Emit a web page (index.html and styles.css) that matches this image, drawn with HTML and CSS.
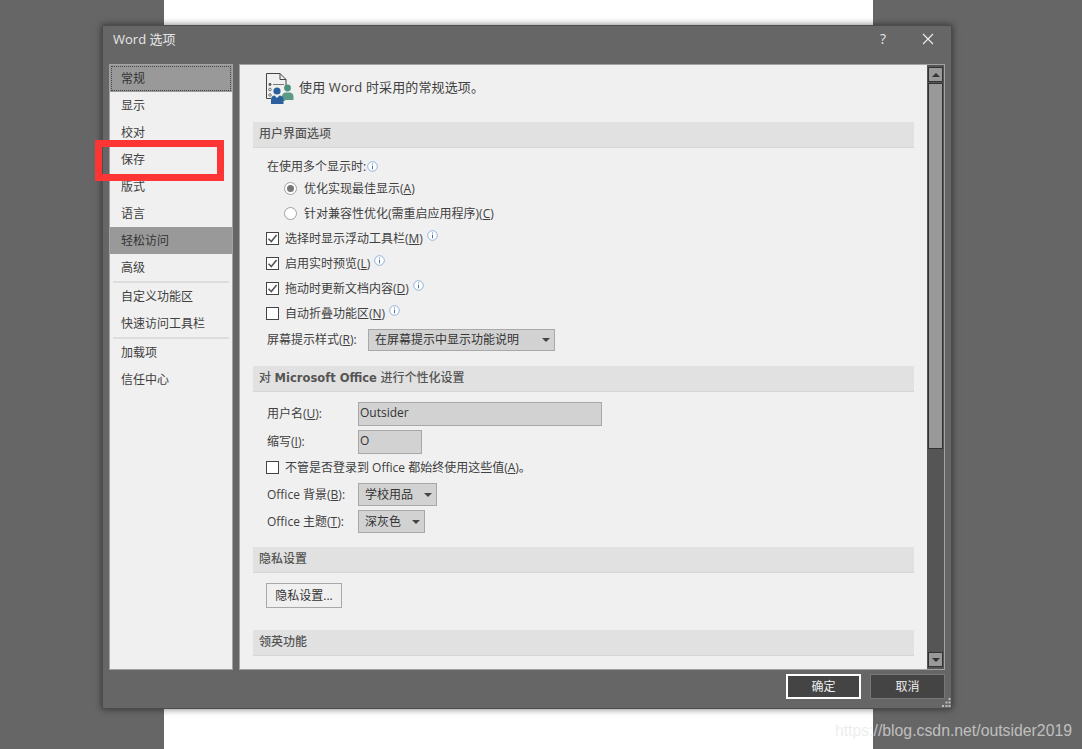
FILE: index.html
```html
<!DOCTYPE html>
<html lang="zh">
<head>
<meta charset="utf-8">
<title>Word 选项</title>
<link rel="stylesheet" href="styles.css">
</head>
<body>
<svg class="defs" width="0" height="0" aria-hidden="true">
  <symbol id="info" viewBox="0 0 11 11">
    <circle cx="5.5" cy="5.5" r="4.8" fill="#fff" stroke="#8fb2dc" stroke-width="1"/>
    <path d="M5.5 2.5v1M5.5 4.7v3.6" stroke="#4a74a8" stroke-width="1" fill="none"/>
  </symbol>
  <symbol id="tick" viewBox="0 0 11 11">
    <path d="M1.5 5.8L4.3 8.6L9.6 2" stroke="#555" stroke-width="1.6" fill="none"/>
  </symbol>
</svg>
<div class="doc"></div>

<div class="dialog">
  <header class="titlebar">
    <span class="title">Word 选项</span>
    <span class="help">?</span>
    <svg class="close" width="12" height="12" viewBox="0 0 12 12"><path d="M1 1L11 11M11 1L1 11" stroke="#eee" stroke-width="1.1" fill="none"/></svg>
  </header>

  <div class="body">
    <nav class="side">
      <div class="item current">常规</div>
      <div class="item">显示</div>
      <div class="item">校对</div>
      <div class="item">保存</div>
      <div class="item">版式</div>
      <div class="item">语言</div>
      <div class="item hover">轻松访问</div>
      <div class="item">高级</div>
      <div class="sep"></div>
      <div class="item">自定义功能区</div>
      <div class="item">快速访问工具栏</div>
      <div class="sep"></div>
      <div class="item">加载项</div>
      <div class="item">信任中心</div>
    </nav>

    <main class="main">
      <div class="content">
        <div class="intro">
          <svg class="intro-icon" width="30" height="34" viewBox="0 0 30 34">
            <path d="M1.5 27.5V2.5H15L21 8.5V14M15 2.5V8.5H21M1.5 27.5H6" stroke="#444" stroke-width="1" fill="none"/>
            <path d="M8 13.5H19" stroke="#777" stroke-width="1" fill="none"/>
            <circle cx="5" cy="13.5" r="1.4" fill="#555"/>
            <circle cx="5" cy="18.5" r="1.3" fill="none" stroke="#555" stroke-width=".8"/>
            <circle cx="5" cy="24" r="1.3" fill="none" stroke="#555" stroke-width=".8"/>
            <circle cx="22.5" cy="17" r="3.4" fill="#4f9079"/>
            <path d="M17 30V25.5C17 22.8 19 21.5 20.5 21.5H24.5C26.5 21.5 28.5 23 28.5 25.5V29H20V30Z" fill="#5c9a84"/>
            <circle cx="12" cy="20" r="3.6" fill="#2b5f9e"/>
            <path d="M6 33V28.5C6 25.8 8 24.5 9.5 24.5L12 27L14.5 24.5C16.5 24.5 18.5 26 18.5 28.5V33Z" fill="#2b5f9e"/>
          </svg>
          <span class="intro-text">使用 Word 时采用的常规选项。</span>
        </div>

        <h2 class="section">用户界面选项</h2>
        <div class="group group-ui">
          <div class="row row-lead">在使用多个显示时:<svg class="info info-lead"><use href="#info"/></svg></div>
          <div class="row indent"><span class="radio on"></span>优化实现最佳显示(<u>A</u>)</div>
          <div class="row indent"><span class="radio"></span>针对兼容性优化(需重启应用程序)(<u>C</u>)</div>
          <div class="row check"><span class="box"><svg width="11" height="11"><use href="#tick"/></svg></span>选择时显示浮动工具栏(<u>M</u>)<svg class="info"><use href="#info"/></svg></div>
          <div class="row check"><span class="box"><svg width="11" height="11"><use href="#tick"/></svg></span>启用实时预览(<u>L</u>)<svg class="info"><use href="#info"/></svg></div>
          <div class="row check"><span class="box"><svg width="11" height="11"><use href="#tick"/></svg></span>拖动时更新文档内容(<u>D</u>)<svg class="info"><use href="#info"/></svg></div>
          <div class="row check"><span class="box"></span>自动折叠功能区(<u>N</u>)<svg class="info"><use href="#info"/></svg></div>
          <div class="field field-tip">
            <span class="label label-tip">屏幕提示样式(<u>R</u>):</span>
            <span class="select select-tip">在屏幕提示中显示功能说明<i class="arrow"></i></span>
          </div>
        </div>

        <h2 class="section">对 <b>Microsoft Office</b> 进行个性化设置</h2>
        <div class="group group-office">
          <div class="field field-input">
            <span class="label">用户名(<u>U</u>):</span>
            <span class="input input-name">Outsider</span>
          </div>
          <div class="field field-input spaced">
            <span class="label">缩写(<u>I</u>):</span>
            <span class="input input-short">O</span>
          </div>
          <div class="row check row-always"><span class="box"></span>不管是否登录到 Office 都始终使用这些值(<u>A</u>)。</div>
          <div class="field field-small spaced">
            <span class="label">Office 背景(<u>B</u>):</span>
            <span class="select select-bg">学校用品<i class="arrow"></i></span>
          </div>
          <div class="field field-small spaced">
            <span class="label">Office 主题(<u>T</u>):</span>
            <span class="select select-theme">深灰色<i class="arrow"></i></span>
          </div>
        </div>

        <h2 class="section">隐私设置</h2>
        <div class="group group-privacy">
          <span class="button">隐私设置...</span>
        </div>

        <h2 class="section">领英功能</h2>
      </div>

      <div class="scrollbar">
        <span class="sb-btn"><i class="tri up"></i></span>
        <span class="sb-thumb"></span>
        <span class="sb-track"></span>
        <span class="sb-btn"><i class="tri down"></i></span>
      </div>
    </main>
  </div>

  <footer class="footer">
    <span class="action primary">确定</span>
    <span class="action">取消</span>
  </footer>

  <svg class="grip" width="9" height="9" viewBox="0 0 9 9">
    <path d="M6.5 0h2v2h-2zM3.5 3.5h2v2h-2zM6.5 3.5h2v2h-2zM0 7h2v2H0zM3.5 7h2v2h-2zM6.5 7h2v2h-2z" fill="#bbb"/>
  </svg>
</div>

<div class="redbox"></div>
<div class="watermark">https://blog.csdn.net/outsider2019</div>
</body>
</html>
```

FILE: styles.css
```css
* { box-sizing: border-box; }
html, body { margin: 0; padding: 0; }
body {
  position: relative;
  width: 1082px;
  height: 749px;
  overflow: hidden;
  background: #666;
  font: 12px/16px "Open Sans", "Noto Sans CJK SC", sans-serif;
  color: #404040;
}
.defs { position: absolute; }
.doc {
  width: 709px;
  height: 749px;
  margin-left: 164px;
  background: #fff;
}

/* dialog window on the desktop */
.dialog {
  position: absolute;
  left: 102px;
  top: 25px;
  width: 850px;
  height: 684px;
  display: flex;
  flex-direction: column;
  background: #666;
  border: 1px solid #4c4c4c;
  box-shadow: 0 0 7px rgba(0, 0, 0, .55);
}
.titlebar {
  height: 38px;
  flex: none;
  display: flex;
  align-items: center;
  padding: 0 17px 12px 10px;
  color: #e6e6e6;
}
.title { font-size: 13px; flex: 1; }
.help { font-size: 14px; margin-right: 36px; }
.body {
  height: 606px;
  flex: none;
  display: flex;
  gap: 6px;
  padding: 0 6px;
}
.footer {
  flex: 1;
  display: flex;
  justify-content: flex-end;
  gap: 9px;
  padding: 4px 6px 0 0;
}
.action {
  width: 75px;
  height: 25px;
  display: flex;
  align-items: center;
  justify-content: center;
  background: #444;
  border: 1px solid #777;
  color: #eee;
}
.primary { border: 2px solid #fff; }
.grip { position: absolute; right: 0; bottom: 1px; }

/* left list */
.side {
  width: 124px;
  flex: none;
  background: #f0f0f0;
  border: 1px solid #a3a3a3;
}
.item {
  height: 27px;
  display: flex;
  align-items: center;
  padding-left: 11px;
}
.current {
  background: #999;
  color: #333;
  outline: 1px dotted #444;
  outline-offset: -2px;
}
.hover { background: #999; color: #333; }
.sep { height: 2px; margin: 0 3px; background: #ddd; }

/* right panel */
.main {
  flex: 1;
  display: flex;
  background: #f0f0f0;
  border: 1px solid #a3a3a3;
}
.content {
  flex: 1;
  min-width: 0;
  padding: 0 13px;
  overflow: hidden;
}
.intro {
  height: 57px;
  display: flex;
  align-items: flex-start;
  padding: 6px 0 0 12px;
}
.intro-icon { flex: none; margin-right: 4px; }
.intro-text { font-size: 13px; line-height: 32px; letter-spacing: .13px; }

.section {
  height: 26px;
  margin: 0;
  display: flex;
  align-items: center;
  gap: .3em;
  padding: 0 0 2px 6px;
  background: #e1e1e1;
  border-bottom: 1px solid #d6d6d6;
  font-size: 12px;
  font-weight: 500;
  color: #555;
}
.section b {
  font-family: "DejaVu Sans", sans-serif;
  font-size: 11.5px;
  font-weight: 700;
}

.group { padding-left: 14px; }
.group-ui { padding-top: 8px; height: 218px; }
.group-office { padding-top: 10px; height: 155px; }
.group-privacy { padding: 10px 0 22px 13px; height: 57px; }

.row {
  height: 24px;
  margin-bottom: 1px;
  padding-top: 2px;
  display: flex;
  align-items: center;
  white-space: pre;
}
.row-lead { height: 20px; margin-bottom: 0; }
.indent { padding-left: 17px; }
.radio {
  width: 13px;
  height: 13px;
  margin: -2px 7px 0 0;
  border: 1px solid #a0a0a0;
  border-radius: 50%;
  background: #fff;
  display: flex;
  align-items: center;
  justify-content: center;
}
.radio.on::after {
  content: "";
  width: 7px;
  height: 7px;
  border-radius: 50%;
  background: #777;
}
.check { margin-left: -1px; }
.box {
  width: 13px;
  height: 13px;
  flex: none;
  margin: -2px 6px 0 0;
  border: 1px solid #444;
  background: #fff;
  display: flex;
  align-items: center;
  justify-content: center;
}
.info {
  width: 11px;
  height: 11px;
  margin: -7px 0 0 4px;
  flex: none;
}
.info-lead { margin: -2px 0 0 1px; }

.field { display: flex; align-items: center; }
.label { width: 91px; flex: none; }
.label-tip { width: 101px; }
.field-tip { margin-top: 4px; height: 22px; }
.field-input { height: 24px; }
.field-small { height: 23px; }
.spaced { margin-top: 4px; }
.row-always { margin-top: 1px; margin-bottom: 0; }

.select, .input {
  height: 100%;
  display: flex;
  align-items: center;
  background: #d2d2d2;
  border: 1px solid #a8a8a8;
  color: #333;
}
.select { position: relative; padding-left: 6px; }
.input { align-items: flex-start; padding: 2px 0 0 1px; }
.select-tip { width: 187px; }
.select-bg { width: 79px; }
.select-theme { width: 67px; }
.input-name { width: 244px; }
.input-short { width: 64px; }
.arrow {
  position: absolute;
  right: 4px;
  top: 50%;
  margin-top: -2px;
  border: 4px solid transparent;
  border-top: 4px solid #444;
  border-bottom: 0;
}

.button {
  width: 76px;
  height: 25px;
  display: flex;
  align-items: center;
  justify-content: center;
  background: #f0f0f0;
  border: 1px solid #a8a8a8;
  color: #333;
}

/* scrollbar */
.scrollbar {
  width: 17px;
  flex: none;
  display: flex;
  flex-direction: column;
  padding: 2px 1px;
  background: #555;
}
.sb-btn {
  height: 15px;
  flex: none;
  display: flex;
  align-items: center;
  justify-content: center;
  background: #999;
  border: 1px solid #333;
}
.sb-thumb {
  height: 366px;
  flex: none;
  margin-top: 1px;
  background: #999;
  border: 1px solid #333;
}
.sb-track { flex: 1; }
.tri { border: 4px solid transparent; border-top: 0; border-bottom: 4px solid #333; }
.tri.down { border-top: 4px solid #333; border-bottom: 0; }

/* annotations lying over the screenshot */
.redbox {
  position: absolute;
  left: 95px;
  top: 140px;
  width: 129px;
  height: 41px;
  border: 7px solid #fd3535;
}
.watermark {
  position: absolute;
  right: 10px;
  top: 721px;
  font: 15.8px/20px "Liberation Sans", sans-serif;
  color: rgba(230, 230, 230, .7);
  white-space: nowrap;
}
```
